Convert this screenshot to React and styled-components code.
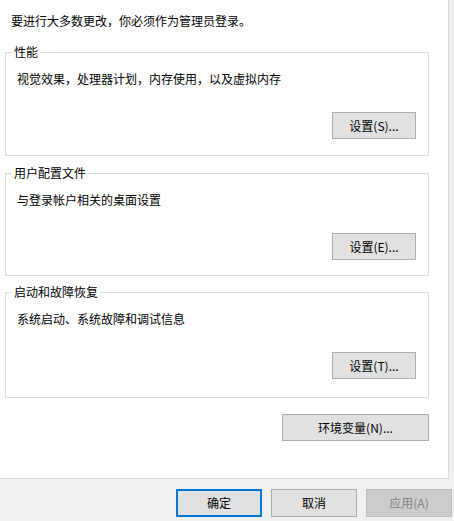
import React from "react";
import styled, { createGlobalStyle } from "styled-components";

const GlobalStyle = createGlobalStyle`
  html, body {
    margin: 0;
    padding: 0;
    background: #f0f0f0;
  }
  * {
    box-sizing: border-box;
  }
`;

const Window = styled.div`
  width: 454px;
  height: 521px;
  display: flex;
  flex-direction: column;
  background: #f0f0f0;
  font-family: "Noto Sans CJK SC", "Noto Sans", "Liberation Sans", sans-serif;
  font-size: 12px;
  line-height: 16px;
  color: #000;
`;

const TabPage = styled.div`
  width: 449px;
  height: 479px;
  flex: none;
  background: #fff;
  border-right: 1px solid #d9d9d9;
  border-bottom: 1px solid #d9d9d9;
  padding: 13px 0 0 5px;
  display: flex;
  flex-direction: column;
`;

const Intro = styled.div`
  margin-left: 6px;
  height: 16px;
`;

const Group = styled.fieldset`
  width: 424px;
  margin: ${(p) => p.$top}px 0 0 0;
  padding: 0;
  border: 1px solid #dcdcdc;
  min-inline-size: 0;
`;

const Legend = styled.legend`
  margin-left: 6px;
  padding: 0 2px;
  line-height: 16px;
`;

const GroupBody = styled.div`
  padding: 11px 12px ${(p) => p.$bottom}px 11px;
  display: flex;
  flex-direction: column;
`;

const Description = styled.div`
  height: 16px;
`;

const ButtonRow = styled.div`
  display: flex;
  justify-content: flex-end;
  margin-top: ${(p) => p.$top || 0}px;
  width: ${(p) => (p.$width ? `${p.$width}px` : "auto")};
`;

const Button = styled.button`
  width: ${(p) => p.$width || 84}px;
  height: 27px;
  padding: 0;
  font: inherit;
  color: #000;
  background: #e1e1e1;
  border: 1px solid #adadad;
  border-radius: 0;
  display: flex;
  align-items: center;
  justify-content: center;
  cursor: default;

  &.primary {
    border: 2px solid #0078d7;
  }

  &:disabled {
    background: #cccccc;
    border-color: #bfbfbf;
    color: #838383;
  }
`;

const Footer = styled.div`
  flex: 1;
  display: flex;
  justify-content: flex-end;
  align-items: flex-start;
  gap: 9px;
  padding: 10px 2px 0 0;
`;

const FooterButton = styled(Button)`
  width: 86px;
  height: 28px;
`;

const groups = [
  { title: "性能", desc: "视觉效果，处理器计划，内存使用，以及虚拟内存", btn: "设置(S)...", top: 15, bottom: 16 },
  { title: "用户配置文件", desc: "与登录帐户相关的桌面设置", btn: "设置(E)...", top: 9, bottom: 15 },
  { title: "启动和故障恢复", desc: "系统启动、系统故障和调试信息", btn: "设置(T)...", top: 8, bottom: 18 },
];

const App = () => {
  return (
    <>
      <GlobalStyle />
      <Window>
        <TabPage>
          <Intro>要进行大多数更改，你必须作为管理员登录。</Intro>
          {groups.map((g) => (
            <Group key={g.title} $top={g.top}>
              <Legend>{g.title}</Legend>
              <GroupBody $bottom={g.bottom}>
                <Description>{g.desc}</Description>
                <ButtonRow $top={25}>
                  <Button>{g.btn}</Button>
                </ButtonRow>
              </GroupBody>
            </Group>
          ))}
          <ButtonRow $top={16} $width={424}>
            <Button $width={147}>环境变量(N)...</Button>
          </ButtonRow>
        </TabPage>
        <Footer>
          <FooterButton className="primary">确定</FooterButton>
          <FooterButton>取消</FooterButton>
          <FooterButton disabled>应用(A)</FooterButton>
        </Footer>
      </Window>
    </>
  );
};

export default App;
